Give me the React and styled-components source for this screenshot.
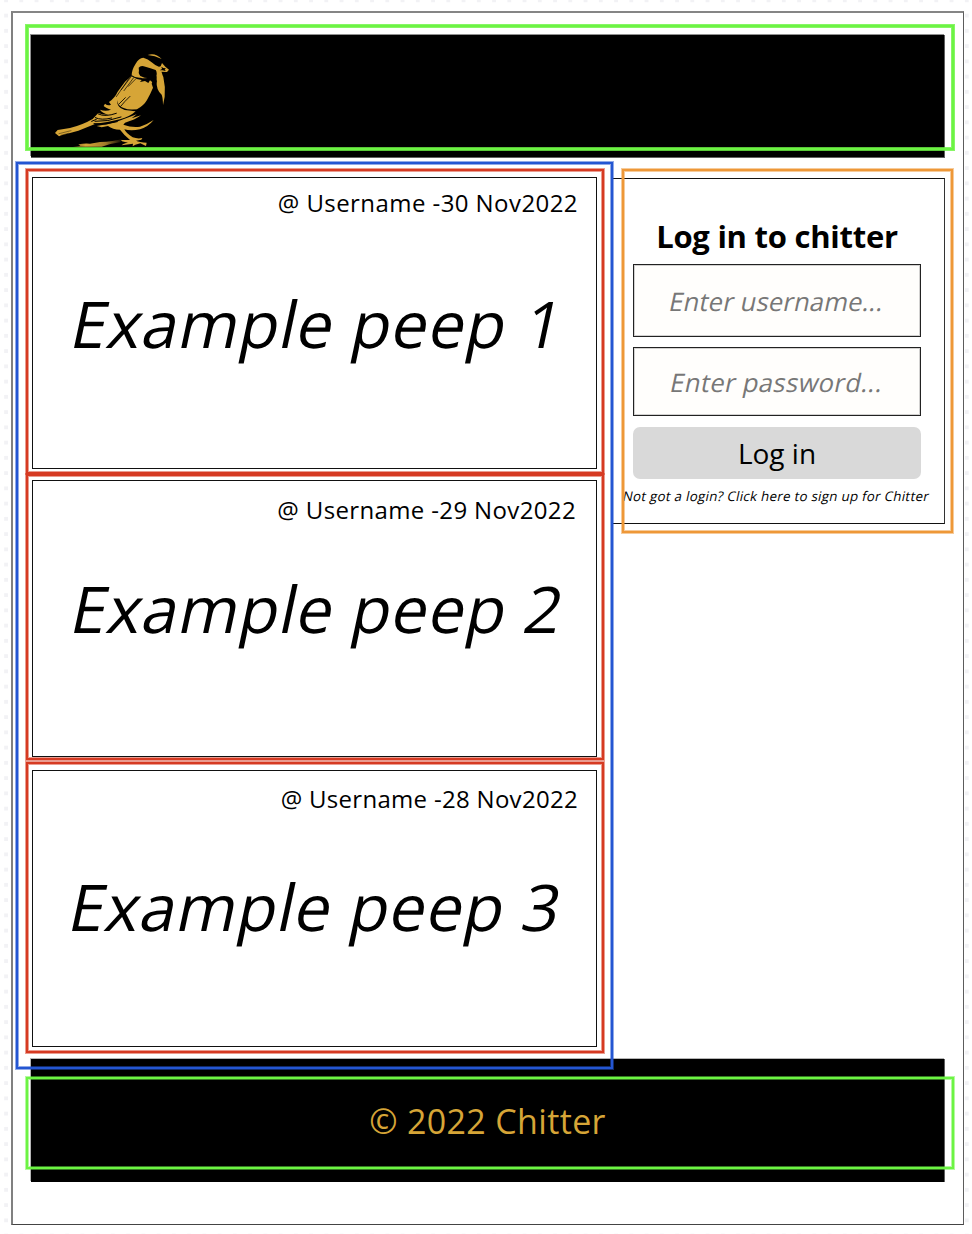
import React from "react";
import styled, { createGlobalStyle } from "styled-components";

const GlobalStyle = createGlobalStyle`
  * { box-sizing: border-box; }
  body {
    margin: 0;
    color: #000;
    background: #fff;
    font-family: "Open Sans", "Noto Sans", sans-serif;
  }
  h1, h2, p { margin: 0; font-weight: 400; }
`;

const Canvas = styled.div`
  width: 972px;
  height: 1234px;
  overflow: hidden;
  padding: 11px 0 0 11px;
  background-color: #fff;
  background-image: conic-gradient(from 90deg at 11.265px 11.265px, #f2f2f5 25%, transparent 0);
  background-size: 15.265px 15.265px;
  background-position: -7.3px -13px;
`;

const Artboard = styled.div`
  width: 953px;
  height: 1214px;
  background: #fff;
  border-style: solid;
  border-width: 2px 1px 1px 2px;
  border-color: #858585 #5c5c5c #444 #808080;
  padding: 22px 18px 0 18px;
`;

const Outline = styled.div`
  position: absolute;
  pointer-events: none;
  z-index: 2;
  inset: ${(p) => p.$inset};
  border: 2px solid ${(p) => p.$color};
  box-shadow: 0 0 0 1px ${(p) => p.$color}${(p) => p.$soft || "80"},
    inset 0 0 0 1px ${(p) => p.$color}${(p) => p.$soft || "80"};
`;

const Bar = styled.div`
  position: relative;
  width: 914px;
  height: ${(p) => p.$height}px;
  background: #000;
  border-right: 1px solid #606060;
`;

const Header = styled(Bar).attrs({ as: "header" })`
  padding: 10px 0 0 14px;
  box-shadow: -1px -1px 0 #909090, 0 1px 0 #606060;
`;

const Footer = styled(Bar).attrs({ as: "footer" })`
  display: flex;
  justify-content: center;
  align-items: center;
  color: #d6a537;
  box-shadow: -1px -1px 0 #b5b5b5;
`;

const BirdSvg = styled.svg`
  display: block;
  width: 135px;
  height: 110px;
`;

const Main = styled.main`
  display: flex;
  height: 902px;
  align-items: flex-start;
`;

const Feed = styled.section`
  position: relative;
  width: 581px;
  height: 901px;
  padding: 20px 0 0 1px;
  display: flex;
  flex-direction: column;
`;

const Peep = styled.article`
  position: relative;
  width: 565px;
  height: ${(p) => p.$height}px;
  margin-bottom: ${(p) => p.$gap}px;
  border: 1px solid #111;
  flex: none;
`;

const Meta = styled.p`
  display: flex;
  justify-content: flex-end;
  padding: ${(p) => p.$top}px ${(p) => p.$right}px 0 0;
  height: ${(p) => p.$top + 34}px;
`;

const Body = styled.h2`
  display: flex;
  padding: ${(p) => p.$top}px 0 0 ${(p) => p.$left}px;
`;

const Text = styled.span`
  display: block;
  white-space: nowrap;
  font-size: ${(p) => p.$size}px;
  line-height: ${(p) => p.$line}px;
  letter-spacing: ${(p) => p.$track || 0}px;
  font-weight: ${(p) => p.$weight || 400};
  transform: ${(p) => (p.$slant ? "skewX(-12deg)" : "none")};
`;

const LoginCard = styled.aside`
  position: relative;
  width: 333px;
  height: 346px;
  margin-top: 21px;
  border: 1px solid #111;
  border-right-color: #333;
  padding: 36px 0 0 20px;
  display: flex;
  flex-direction: column;
`;

const Title = styled.h1`
  width: 288px;
  height: 49px;
  display: flex;
  justify-content: center;
`;

const Field = styled.div`
  width: 288px;
  height: ${(p) => p.$height}px;
  margin-bottom: ${(p) => p.$gap}px;
  border: 1px solid #222;
  box-shadow: inset 0 0 0 1px #99999970;
  background: #fffefc;
  color: #777;
  display: flex;
  justify-content: center;
  align-items: center;
`;

const Button = styled.button`
  width: 288px;
  height: 52px;
  border: 0;
  padding: 0;
  border-radius: 7px;
  background: #d9d9d9;
  color: #000;
  font-family: inherit;
  display: flex;
  justify-content: center;
  align-items: center;
`;

const Hint = styled.p`
  margin: 7px 0 0 -10px;
  display: flex;
`;

const GOLD = "#d6a537";

function Bird() {
  return (
    <BirdSvg viewBox="0 0 405 330" aria-label="Chitter">
      <defs>
        <linearGradient id="shade" x1="0" x2="1">
          <stop offset="0" stopColor={GOLD} stopOpacity="0.5" />
          <stop offset="0.25" stopColor={GOLD} />
          <stop offset="0.65" stopColor={GOLD} stopOpacity="0.75" />
          <stop offset="1" stopColor={GOLD} stopOpacity="0" />
        </linearGradient>
      </defs>
      <g fill={GOLD}>
        <path d="M84 305 L106 303 L100 298 Q120 294 135 296 L165 291 Q205 289 235 281 L225 292 L196 297 L170 305 Z" fill="url(#shade)" />
        <path d="M30 264 L38 255 L75 249 Q112 240 143 222 L160 204 Q172 210 190 209 Q170 203 165 194 Q182 200 198 194 Q180 188 176 183 L180 176 Q189 184 198 179 L192 171 Q210 158 218 140 L240 110 L260 92 Q260 74 272 56 Q281 39 295 38 Q309 41 320 52 Q332 63 343 66 Q350 72 350 82 Q352 90 355 96 Q362 126 359 155 L354 181 Q354 160 350 149 Q333 136 335 106 L322 110 L320 116 L324 128 Q317 145 306 165 Q297 181 276 193 L252 197 L272 199 Q255 215 225 223 Q190 232 152 236 L100 257 L50 271 L42 274 Z" />
        <path d="M155 243 Q190 238 213 231 L275 208 L260 220 L288 211 Q270 225 240 233 L235 239 Q262 249 285 245 Q307 238 326 225 Q310 245 285 253 Q258 259 238 253 Q244 266 263 277 Q278 282 292 279 L289 284 L273 287 Q283 292 305 293 L303 303 L286 295 L271 299 L263 304 L264 296 L230 301 Q231 296 249 293 L231 289 L228 285 L255 285 Q237 270 225 254 Q203 254 189 243 L170 247 Z" />
        <path d="M308 30 Q331 22 350 42 Q330 32 308 30 Z" />
        <path d="M338 67 L347 64 L351 54 L361 65 L372 74 L366 81 L345 80 L336 75 Z" />
      </g>
      <g fill="#000">
        <path d="M281 68 Q287 60 301 65 Q316 69 332 75 Q338 84 333 98 Q327 104 315 100 Q297 100 286 93 Q279 84 282 78 Z" />
        <path d="M259 90 Q270 99 286 98 Q302 103 335 94 L335 112 L326 115 L315 106 L310 114 L300 108 L285 111 L290 105 Q271 102 259 94 Z" />
        <path d="M217 165 Q217 183 238 190 Q252 196 278 192 Q247 202 228 190 Q215 181 217 165 Z" />
        <path d="M349 65 L351 72 L344 76 L352 76 L362 78 L359 72 L364 70 L355 69 Z" />
      </g>
      <g fill="none" stroke="#000" strokeLinecap="round">
        <path strokeWidth="2" d="M266 98 L237 137 M259 94 L229 134 M271 103 L250 124 M253 99 L214 155" />
        <path strokeWidth="2.5" d="M255 154 Q238 170 227 184 M241 158 L223 176" />
        <path strokeWidth="3" d="M160 207 Q180 217 214 205 M151 218 Q169 227 200 219 M150 229 Q188 231 228 216 M147 236 Q182 241 217 230 M154 223 L140 229" />
        <path strokeWidth="2.5" d="M42 266 L78 257 M48 271 L70 265" strokeOpacity="0.5" />
      </g>
    </BirdSvg>
  );
}

const peeps = [
  { meta: "@ Username -30 Nov2022", track: 0.43, body: "Example peep 1", height: 292, gap: 11, top: 8, right: 18, bodyTop: 59, left: 40 },
  { meta: "@ Username -29 Nov2022", track: 0.36, body: "Example peep 2", height: 277, gap: 13, top: 12, right: 20, bodyTop: 37, left: 40 },
  { meta: "@ Username -28 Nov2022", track: 0.3, body: "Example peep 3", height: 277, gap: 0, top: 11, right: 18, bodyTop: 46, left: 38 },
];

const peepOutlines = ["-9px -8px -6px -7px", "-7px -8px -4px -7px", "-9px -8px -7px -7px"];

export default function App() {
  return (
    <>
      <GlobalStyle />
      <Canvas>
        <Artboard>
          <Header $height={122}>
            <Bird />
            <Outline $color="#6cf443" $soft="d0" $inset="-10px -10px 7px -5px" />
          </Header>
          <Main>
            <Feed>
              {peeps.map((p, i) => (
                <Peep key={p.meta} $height={p.height} $gap={p.gap}>
                  <Meta $top={p.top} $right={p.right}>
                    <Text $size={24} $line={34} $track={p.track}>{p.meta}</Text>
                  </Meta>
                  <Body $top={p.bodyTop} $left={p.left}>
                    <Text $size={64.4} $line={88} $track={0.9} $slant>{p.body}</Text>
                  </Body>
                  <Outline $color="#d63a22" $inset={peepOutlines[i]} />
                </Peep>
              ))}
              <Outline $color="#2456d2" $inset="5px -1px -11px -15px" />
            </Feed>
            <LoginCard>
              <Title>
                <Text $size={31} $line={42} $weight={700} $track={-0.25}>Log in to chitter</Text>
              </Title>
              <Field $height={73} $gap={10}>
                <Text $size={25.5} $line={36} $track={0.2} $slant>Enter username...</Text>
              </Field>
              <Field $height={69} $gap={11}>
                <Text $size={25.5} $line={36} $track={0.4} $slant>Enter password...</Text>
              </Field>
              <Button type="button">
                <Text $size={28} $line={38}>Log in</Text>
              </Button>
              <Hint>
                <Text $size={13.3} $line={20} $track={0.29} $slant>Not got a login? Click here to sign up for Chitter</Text>
              </Hint>
              <Outline $color="#ee9838" $inset="-10px -9px -10px 9px" />
            </LoginCard>
          </Main>
          <Footer $height={123}>
            <Text $size={34} $line={46} $track={0.35}>© 2022 Chitter</Text>
            <Outline $color="#6cf443" $inset="18px -10px 13px -5px" />
          </Footer>
        </Artboard>
      </Canvas>
    </>
  );
}
